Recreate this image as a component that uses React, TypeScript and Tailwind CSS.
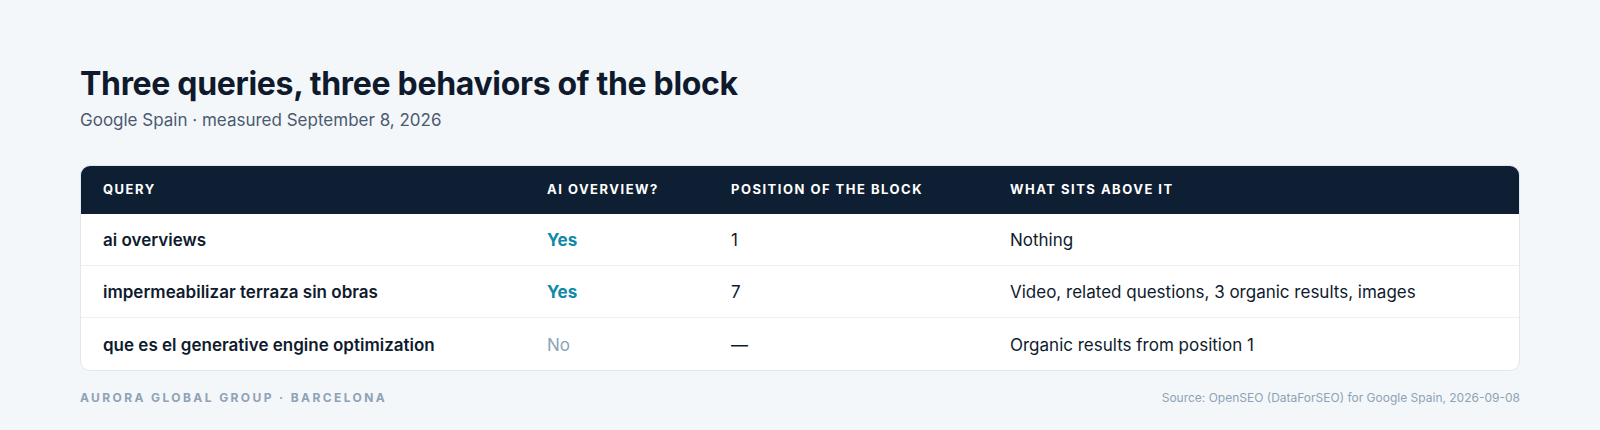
import React from "react";

const rows = [
  { q: "ai overviews", ai: true, pos: "1", above: "Nothing" },
  { q: "impermeabilizar terraza sin obras", ai: true, pos: "7", above: "Video, related questions, 3 organic results, images" },
  { q: "que es el generative engine optimization", ai: false, pos: "—", above: "Organic results from position 1" },
];

export default function App() {
  return (
    <div
      className="w-[1600px] h-[430px] bg-[#f4f7fa] px-20 pt-[64px]"
      style={{ fontFamily: "Inter, 'Noto Sans', sans-serif" }}
    >
      <h1 className="text-[32px] leading-[40px] font-bold tracking-[-0.01em] text-[#0f1b2d]">
        Three queries, three behaviors of the block
      </h1>
      <p className="mt-[4px] text-[17px] leading-[24px] text-[#4a5b70]">
        Google Spain · measured September 8, 2026
      </p>
      <div className="mt-[33px] rounded-[10px] border border-[#e1e7ee] bg-white overflow-hidden">
        <div className="flex h-[48px] items-center bg-[#0f1f33] text-[13px] font-bold tracking-[0.115em] text-white">
          <div className="w-[443px] pl-[22px]">QUERY</div>
          <div className="w-[183px] pl-[23px]">AI OVERVIEW?</div>
          <div className="w-[280px] pl-[24px]">POSITION OF THE BLOCK</div>
          <div className="flex-1 pl-[23px]">WHAT SITS ABOVE IT</div>
        </div>
        {rows.map((r, i) => (
          <div
            key={i}
            className={`flex h-[52px] items-center pt-[3px] text-[17px] text-[#0f1b2d] ${i < rows.length - 1 ? "border-b border-[#edf1f5]" : ""}`}
          >
            <div className="w-[443px] pl-[22px] font-semibold">{r.q}</div>
            <div className={`w-[183px] pl-[23px] ${r.ai ? "font-bold text-[#0e8aa8]" : "text-[#8ea2b5]"}`}>
              {r.ai ? "Yes" : "No"}
            </div>
            <div className="w-[280px] pl-[24px]">{r.pos}</div>
            <div className="flex-1 pl-[23px]">{r.above}</div>
          </div>
        ))}
      </div>
      <div className="mt-[18px] flex items-center justify-between">
        <div className="text-[12px] font-bold tracking-[0.2em] text-[#8ea2b5]">AURORA GLOBAL GROUP · BARCELONA</div>
        <div className="text-[12px] text-[#8ea2b5]">Source: OpenSEO (DataForSEO) for Google Spain, 2026-09-08</div>
      </div>
    </div>
  );
}
